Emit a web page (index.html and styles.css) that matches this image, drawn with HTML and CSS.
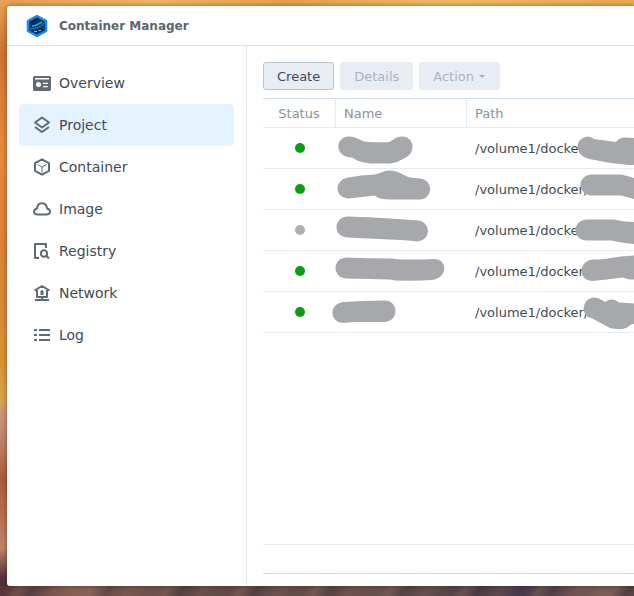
FILE: index.html
```html
<!DOCTYPE html>
<html lang="en">
<head>
<meta charset="utf-8">
<meta name="viewport" content="width=device-width, initial-scale=1">
<title>Container Manager</title>
<link rel="stylesheet" href="styles.css">
</head>
<body>
<div class="window">
  <header class="titlebar">
    <svg class="logo" viewBox="0 0 22 24" aria-hidden="true">
      <path d="M11 2 20 7V17L11 22 2 17V7Z" fill="#06366c" stroke="#0f8df0" stroke-width="2.500" stroke-linejoin="round"/>
      <path d="M11 4 18 8V16L11 20 4 16V8Z" fill="#082a55"/>
      <path d="M4 14C8 14 14 12 18 8V11C15 14 9 16 4 16Z" fill="#0a64a8"/>
      <path d="M6 12C10 12 12 10 16 8" fill="none" stroke="#22b8dc" stroke-width="1.500"/>
      <path d="M8 17.500H11M12.500 16.500H15" stroke="#6eb9e8" stroke-width="1"/>
    </svg>
    <h1 class="title">Container Manager</h1>
  </header>
  <div class="content">
    <nav class="sidebar" aria-label="Sections">
      <a class="nav-item" href="#overview">
        <svg class="icon" viewBox="0 0 18 18" aria-hidden="true"><path class="solid" fill-rule="evenodd" d="M1.500 2H16.500A1.500 1.500 0 0 1 18 3.500V15.500A1.500 1.500 0 0 1 16.500 17H1.500A1.500 1.500 0 0 1 0 15.500V3.500A1.500 1.500 0 0 1 1.500 2ZM2 4V5.500H16V4ZM5.500 8A2.500 2.500 0 1 0 5.500 13A2.500 2.500 0 1 0 5.500 8ZM10 8.800V10H15V8.800ZM10 12V13.200H15V12Z"/></svg>
        Overview</a>
      <a class="nav-item active" href="#project" aria-current="page">
        <svg class="icon" viewBox="0 0 18 18" aria-hidden="true"><path d="M9 1.500 16 6.500 9 11.500 2 6.500ZM2 11 9 16 16 11"/></svg>
        Project</a>
      <a class="nav-item" href="#container">
        <svg class="icon" viewBox="0 0 18 18" aria-hidden="true"><path d="M9 1.300 16 5.200V12.800L9 16.700 2 12.800V5.200Z"/><path class="thin" d="M4.500 6.500 9 9 13.500 6.500M9 9V14.500"/></svg>
        Container</a>
      <a class="nav-item" href="#image">
        <svg class="icon" viewBox="0 0 18 18" aria-hidden="true"><path d="M4.500 14.500H13.500C18 14.500 18.200 9.500 14 8.500C13.500 1.500 4.500 1.500 4 8.500C0 9.300 0 14.500 4.500 14.500Z"/></svg>
        Image</a>
      <a class="nav-item" href="#registry">
        <svg class="icon" viewBox="0 0 18 18" aria-hidden="true"><path d="M6 16H2V2H13V6M13.500 14 16 16.500"/><circle cx="11" cy="11.500" r="3.200"/></svg>
        Registry</a>
      <a class="nav-item" href="#network">
        <svg class="icon" viewBox="0 0 18 18" aria-hidden="true"><path d="M1.500 6.500 9 2 16.500 6.500M4 6V13H14V6M2 16H16M9 13V16"/><path class="solid" d="M7.500 7 9 6 10.500 7V11H7.500Z"/></svg>
        Network</a>
      <a class="nav-item" href="#log">
        <svg class="icon" viewBox="0 0 18 18" aria-hidden="true"><path d="M1 4H4M1 9H4M1 14H4M6 4H17M6 9H17M6 14H17"/></svg>
        Log</a>
    </nav>
    <main class="main">
      <div class="toolbar">
        <button class="button" type="button">Create</button>
        <button class="button" type="button" disabled>Details</button>
        <button class="button" type="button" disabled>Action <span class="caret"></span></button>
      </div>
      <table class="projects">
        <thead>
          <tr><th class="status" scope="col">Status</th><th class="name" scope="col">Name</th><th scope="col">Path</th></tr>
        </thead>
        <tbody>
          <tr>
            <td class="status"><span class="dot"></span></td>
            <td><svg class="mask" viewBox="0 0 130 40" width="130" height="40" aria-hidden="true"><path d="M13 8.500C20 8.500 23 12 28 13.500Q31 14.500 52 14.300C57 13 59 8.500 66 8.500C77 8.500 80 22 72 28C64 33 59 35.500 51 35.500H40C26 35.500 22 33 16 29.500C-1 30-2 9 13 8.500Z"/></svg></td>
            <td>/volume1/docker/<svg class="mask" viewBox="0 0 167 40" width="167" height="40" aria-hidden="true"><path d="M121 8.500Q124 8.500 127 11L149 14Q152 9.500 158 9.500L167 10V37L162 37 144 35 122 31C107 27 107 10 121 8.500Z"/></svg></td>
          </tr>
          <tr>
            <td class="status"><span class="dot"></span></td>
            <td><svg class="mask" viewBox="0 0 130 40" width="130" height="40" aria-hidden="true"><path d="M12 8.500Q25 6 39 5.500C45 4 48 1.500 55 1.500C63 2 68 7 74 8.500L84 9.500C98 11 97 30 84 30.500H54Q45 30 43 29 41 28 39 26.500L12 29.500C-2 28-2 11 12 8.500Z"/></svg></td>
            <td>/volume1/docker/<svg class="mask" viewBox="0 0 167 40" width="167" height="40" aria-hidden="true"><path d="M124 5.500H154Q158 6 167 9V30L154 26.500H124C110 25 110 7 124 5.500Z"/></svg></td>
          </tr>
          <tr>
            <td class="status"><span class="dot stopped"></span></td>
            <td><svg class="mask" viewBox="0 0 130 40" width="130" height="40" aria-hidden="true"><path d="M11 6.500Q32 7 54 8.500L82 10.500C95 12 96 30 81 31.500Q72 30 64 30L11 27.500C-3 26-3 8 11 6.500Z"/></svg></td>
            <td>/volume1/docker/<svg class="mask" viewBox="0 0 167 40" width="167" height="40" aria-hidden="true"><path d="M119 9.500H147Q157 12 167 12V34Q157 33 144 30.500H119C105 29 105 11 119 9.500Z"/></svg></td>
          </tr>
          <tr>
            <td class="status"><span class="dot"></span></td>
            <td><svg class="mask" viewBox="0 0 130 40" width="130" height="40" aria-hidden="true"><path d="M10 6.500Q32 7.500 56 7.500L61 8.300Q80 9 98 8C112 8 112 27 96 29Q80 30 59 29.500L54 28.500 10 27.500C-4 26-4 8 10 6.500Z"/></svg></td>
            <td>/volume1/docker/<svg class="mask" viewBox="0 0 167 40" width="167" height="40" aria-hidden="true"><path d="M125 8.500Q132 8.500 137 8L154 5.500 167 4.500V28.500H162L156 26.500 140 28.500 125 30C111 29 111 11 125 8.500Z"/></svg></td>
          </tr>
          <tr>
            <td class="status"><span class="dot"></span></td>
            <td><svg class="mask" viewBox="0 0 130 40" width="130" height="40" aria-hidden="true"><path d="M7 10 27 9 49 8.500C63 9 63 29 49 30L17 30 7 31C-7 30-7 12 7 10Z"/></svg></td>
            <td>/volume1/docker/<svg class="mask" viewBox="0 0 167 40" width="167" height="40" aria-hidden="true"><path d="M127 5.500C131 5.500 135 8 138 10 143 6 148 7 152 10.500L167 11.500V32Q164 32 162 34 159 37 155 37 146 37 143 36L129 28.500C127 27 124 26 121 25 113 19 117 6 127 5.500Z"/></svg></td>
          </tr>
        </tbody>
      </table>
      <footer class="statusbar"></footer>
    </main>
  </div>
</div>
</body>
</html>
```

FILE: styles.css
```css
* { box-sizing: border-box; }

body {
  margin: 0;
  min-height: 100vh;
  padding: 6px 0 10px 7px;
  font-family: Verdana, "DejaVu Sans", sans-serif;
  font-size: 13px;
  color: #414b55;
  background:
    linear-gradient(90deg, #e6a052, #efb461 25%, #e4a04d 45%, #f1b863 70%, #e9a951) top / 100% 6px no-repeat,
    repeating-linear-gradient(125deg, #5d474400 0 9px, #8a685c66 17px, #3e303966 29px, #7a5a5266 47px, #5d474400 61px) bottom / 100% 10px no-repeat,
    linear-gradient(90deg, #54353a, #8a6255 12%, #5f4846 30%, #66504c 60%, #46384a 82%, #7b5d55 95%, #5a4548) bottom / 100% 10px no-repeat,
    linear-gradient(180deg, #e9a450, #cf7136 9%, #e38b3d 24%, #da8438 42%, #d99135 60%, #d9a34c 67%, #c99577 69%, #c08267 74%, #ad5b43 80%, #b96c50 86%, #bd8469 92%, #56323a 97%, #4a303b);
}

.window {
  display: flex;
  flex-direction: column;
  min-height: calc(100vh - 16px);
  overflow: hidden;
  background: #fff;
  border-radius: 3px 0 0 3px;
  box-shadow: 0 0 5px rgba(60, 20, 0, .5);
}

.titlebar {
  display: flex;
  align-items: center;
  gap: 11px;
  height: 40px;
  padding-left: 19px;
  border-bottom: 1px solid #e0e3e8;
}

.logo { width: 22px; height: 24px; }

.title {
  margin: 0;
  font-size: 12px;
  font-weight: bold;
  color: #5c6670;
}

.content { display: flex; flex: 1; }

.sidebar {
  flex: 0 0 240px;
  padding: 16px 12px;
  border-right: 1px solid #dde4ea;
}

.nav-item {
  display: flex;
  align-items: center;
  gap: 8px;
  height: 42px;
  padding-left: 14px;
  border-radius: 4px;
  font-size: 14px;
  color: #414b55;
  text-decoration: none;
}

.nav-item.active { background: #e5f2ff; }

.icon {
  width: 18px;
  height: 18px;
  fill: none;
  stroke: #606b76;
  stroke-width: 2;
  stroke-linejoin: round;
}

.icon .solid { fill: #606b76; stroke: none; }
.icon .thin { stroke-width: 1; }

.main {
  display: flex;
  flex: 1;
  flex-direction: column;
  min-width: 0;
  padding: 16px 0 12px 16px;
}

.toolbar { display: flex; gap: 6px; margin-bottom: 8px; }

.button {
  height: 28px;
  padding: 0 13px;
  border: 1px solid #b9c5ce;
  border-radius: 3px;
  background: #e8edf5;
  font: inherit;
  color: #414b55;
}

.button:disabled { border-color: #e8edf5; color: #adb3bb; }

.caret {
  display: inline-block;
  margin: 0 1px;
  border: 3px solid transparent;
  border-top-color: #a4abb4;
  border-bottom: 0;
  vertical-align: 3px;
}

.projects {
  width: 100%;
  table-layout: fixed;
  border-spacing: 0;
  border-top: 1px solid #d5e1eb;
}

.projects th,
.projects td {
  padding: 0 8px;
  border-bottom: 1px solid #e5ebf3;
  text-align: left;
  white-space: nowrap;
}

.projects th {
  height: 29px;
  border-right: 1px solid #e5ebf3;
  font-weight: normal;
  color: #8b929a;
}

.projects th:last-child { border-right: 0; }

.projects td { position: relative; height: 41px; }

.projects .status { width: 73px; text-align: center; }
.projects .name { width: 131px; }

.dot {
  display: block;
  width: 10px;
  height: 10px;
  margin: 0 auto;
  border-radius: 50%;
  background: #0a9f12;
}

.dot.stopped { background: #acafb4; }

/* Covers private names and folders without affecting row layout. */
.mask {
  position: absolute;
  top: 0;
  left: 0;
  overflow: visible;
  fill: #a7a8ac;
}

.statusbar {
  height: 30px;
  margin-top: auto;
  border-top: 1px solid #e5ecf2;
  border-bottom: 1px solid #d5e0e8;
}
```
